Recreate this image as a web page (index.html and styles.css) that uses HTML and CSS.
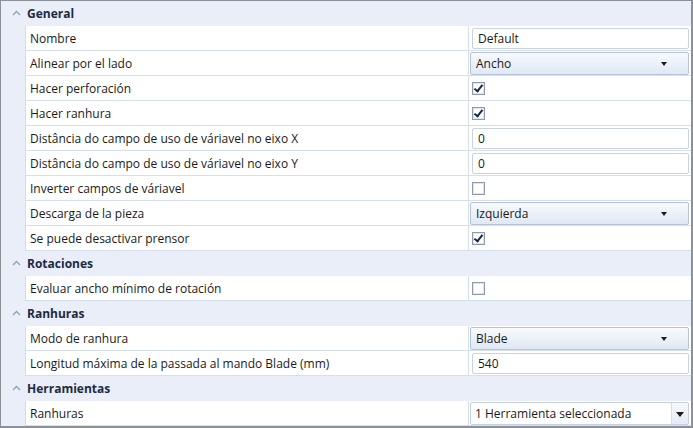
FILE: index.html
```html
<!DOCTYPE html>
<html>
<head>
<meta charset="utf-8">
<link rel="stylesheet" href="styles.css">
</head>
<body>
<div class="grid">
  <div class="head"><span class="chev"><svg width="9" height="6" viewBox="0 0 9 6"><polyline points="1,5 4.5,1.5 8,5" fill="none" stroke="#8ea3c2" stroke-width="1.4"/></svg></span><span class="title">General</span></div>
  <div class="row"><div class="name">Nombre</div><div class="val"><div class="text">Default</div></div></div>
  <div class="row"><div class="name">Alinear por el lado</div><div class="val"><div class="combo">Ancho<span class="tri"></span></div></div></div>
  <div class="row"><div class="name">Hacer perforación</div><div class="val"><span class="cb on"></span></div></div>
  <div class="row"><div class="name">Hacer ranhura</div><div class="val"><span class="cb on"></span></div></div>
  <div class="row"><div class="name">Distância do campo de uso de váriavel no eixo X</div><div class="val"><div class="text">0</div></div></div>
  <div class="row"><div class="name">Distância do campo de uso de váriavel no eixo Y</div><div class="val"><div class="text">0</div></div></div>
  <div class="row"><div class="name">Inverter campos de váriavel</div><div class="val"><span class="cb"></span></div></div>
  <div class="row"><div class="name">Descarga de la pieza</div><div class="val"><div class="combo">Izquierda<span class="tri"></span></div></div></div>
  <div class="row"><div class="name">Se puede desactivar prensor</div><div class="val"><span class="cb on"></span></div></div>
  <div class="head"><span class="chev"><svg width="9" height="6" viewBox="0 0 9 6"><polyline points="1,5 4.5,1.5 8,5" fill="none" stroke="#8ea3c2" stroke-width="1.4"/></svg></span><span class="title">Rotaciones</span></div>
  <div class="row"><div class="name">Evaluar ancho mínimo de rotación</div><div class="val"><span class="cb"></span></div></div>
  <div class="head"><span class="chev"><svg width="9" height="6" viewBox="0 0 9 6"><polyline points="1,5 4.5,1.5 8,5" fill="none" stroke="#8ea3c2" stroke-width="1.4"/></svg></span><span class="title">Ranhuras</span></div>
  <div class="row"><div class="name">Modo de ranhura</div><div class="val"><div class="combo">Blade<span class="tri"></span></div></div></div>
  <div class="row"><div class="name">Longitud máxima de la passada al mando Blade (mm)</div><div class="val"><div class="text">540</div></div></div>
  <div class="head"><span class="chev"><svg width="9" height="6" viewBox="0 0 9 6"><polyline points="1,5 4.5,1.5 8,5" fill="none" stroke="#8ea3c2" stroke-width="1.4"/></svg></span><span class="title">Herramientas</span></div>
  <div class="row"><div class="name">Ranhuras</div><div class="val"><div class="multi"><span class="mtext">1 Herramienta seleccionada</span><span class="btn"><span class="tri big"></span></span></div></div></div>
</div>
</body>
</html>
```
FILE: styles.css
```css
* { box-sizing: border-box; }
html, body { margin: 0; padding: 0; background: #fff; }
body { font-family: "Open Sans", "Noto Sans", sans-serif; font-size: 12px; color: #1a1a1a; }
.grid {
  width: 693px; height: 428px; overflow: hidden;
  border-style: solid; border-color: #8c9097;
  border-width: 1px 2px 2px 1px;
  background: #e9eef8;
}
.head {
  height: 25px; display: flex; align-items: center;
  background: #e9eef8;
}
.chev { width: 26px; display: flex; justify-content: center; padding-left: 4px; padding-bottom: 1px; }
.title { font-weight: bold; color: #1d2a44; }
.row {
  height: 25px; display: flex; margin-left: 24px;
  background: #fff;
  border-left: 1px solid #d3dcea;
  border-bottom: 1px solid #d6dfec;
}
.name {
  width: 443px; padding-left: 4px; display: flex; align-items: center;
  border-right: 1px solid #d6dfec; white-space: nowrap;
}
.val { flex: 1; display: flex; align-items: center; padding-left: 3px; padding-right: 2px; }
.text {
  width: 100%; height: 21px; border: 1px solid #c8d2e1; border-radius: 2px;
  padding-left: 5px; display: flex; align-items: center; background: #fff;
}
.combo {
  width: calc(100% + 2px); margin-left: -2px; height: 23px;
  border: 1px solid #b4c4da; border-radius: 2px;
  background: linear-gradient(#f8fafd, #dfe8f4);
  padding-left: 5px; display: flex; align-items: center; position: relative;
}
.tri {
  position: absolute; right: 21px; top: 9px;
  width: 0; height: 0;
  border-left: 3.5px solid transparent; border-right: 3.5px solid transparent;
  border-top: 4px solid #1a1a1a;
}
.cb {
  width: 13px; height: 13px; border: 1px solid #8f9aac;
  background: #fff; position: relative;
  box-shadow: inset 0 0 0 1px #dde4ee;
}
.cb.on::after {
  content: ""; position: absolute; left: 3px; top: 0px;
  width: 3px; height: 7px;
  border-right: 2px solid #17264a; border-bottom: 2px solid #17264a;
  transform: rotate(38deg);
}
.multi {
  width: calc(100% + 2px); margin-left: -2px; height: 23px;
  border: 1px solid #c4cfdf; border-radius: 2px; background: #fff;
  display: flex; align-items: stretch;
}
.mtext { flex: 1; padding-left: 4px; display: flex; align-items: center; }
.btn {
  width: 17px; border-left: 1px solid #d3dcea; position: relative;
  background: linear-gradient(#f6f8fb, #e6ecf4);
}
.tri.big { right: 4px; top: 9px; border-left-width: 4px; border-right-width: 4px; border-top-width: 5px; }
```
